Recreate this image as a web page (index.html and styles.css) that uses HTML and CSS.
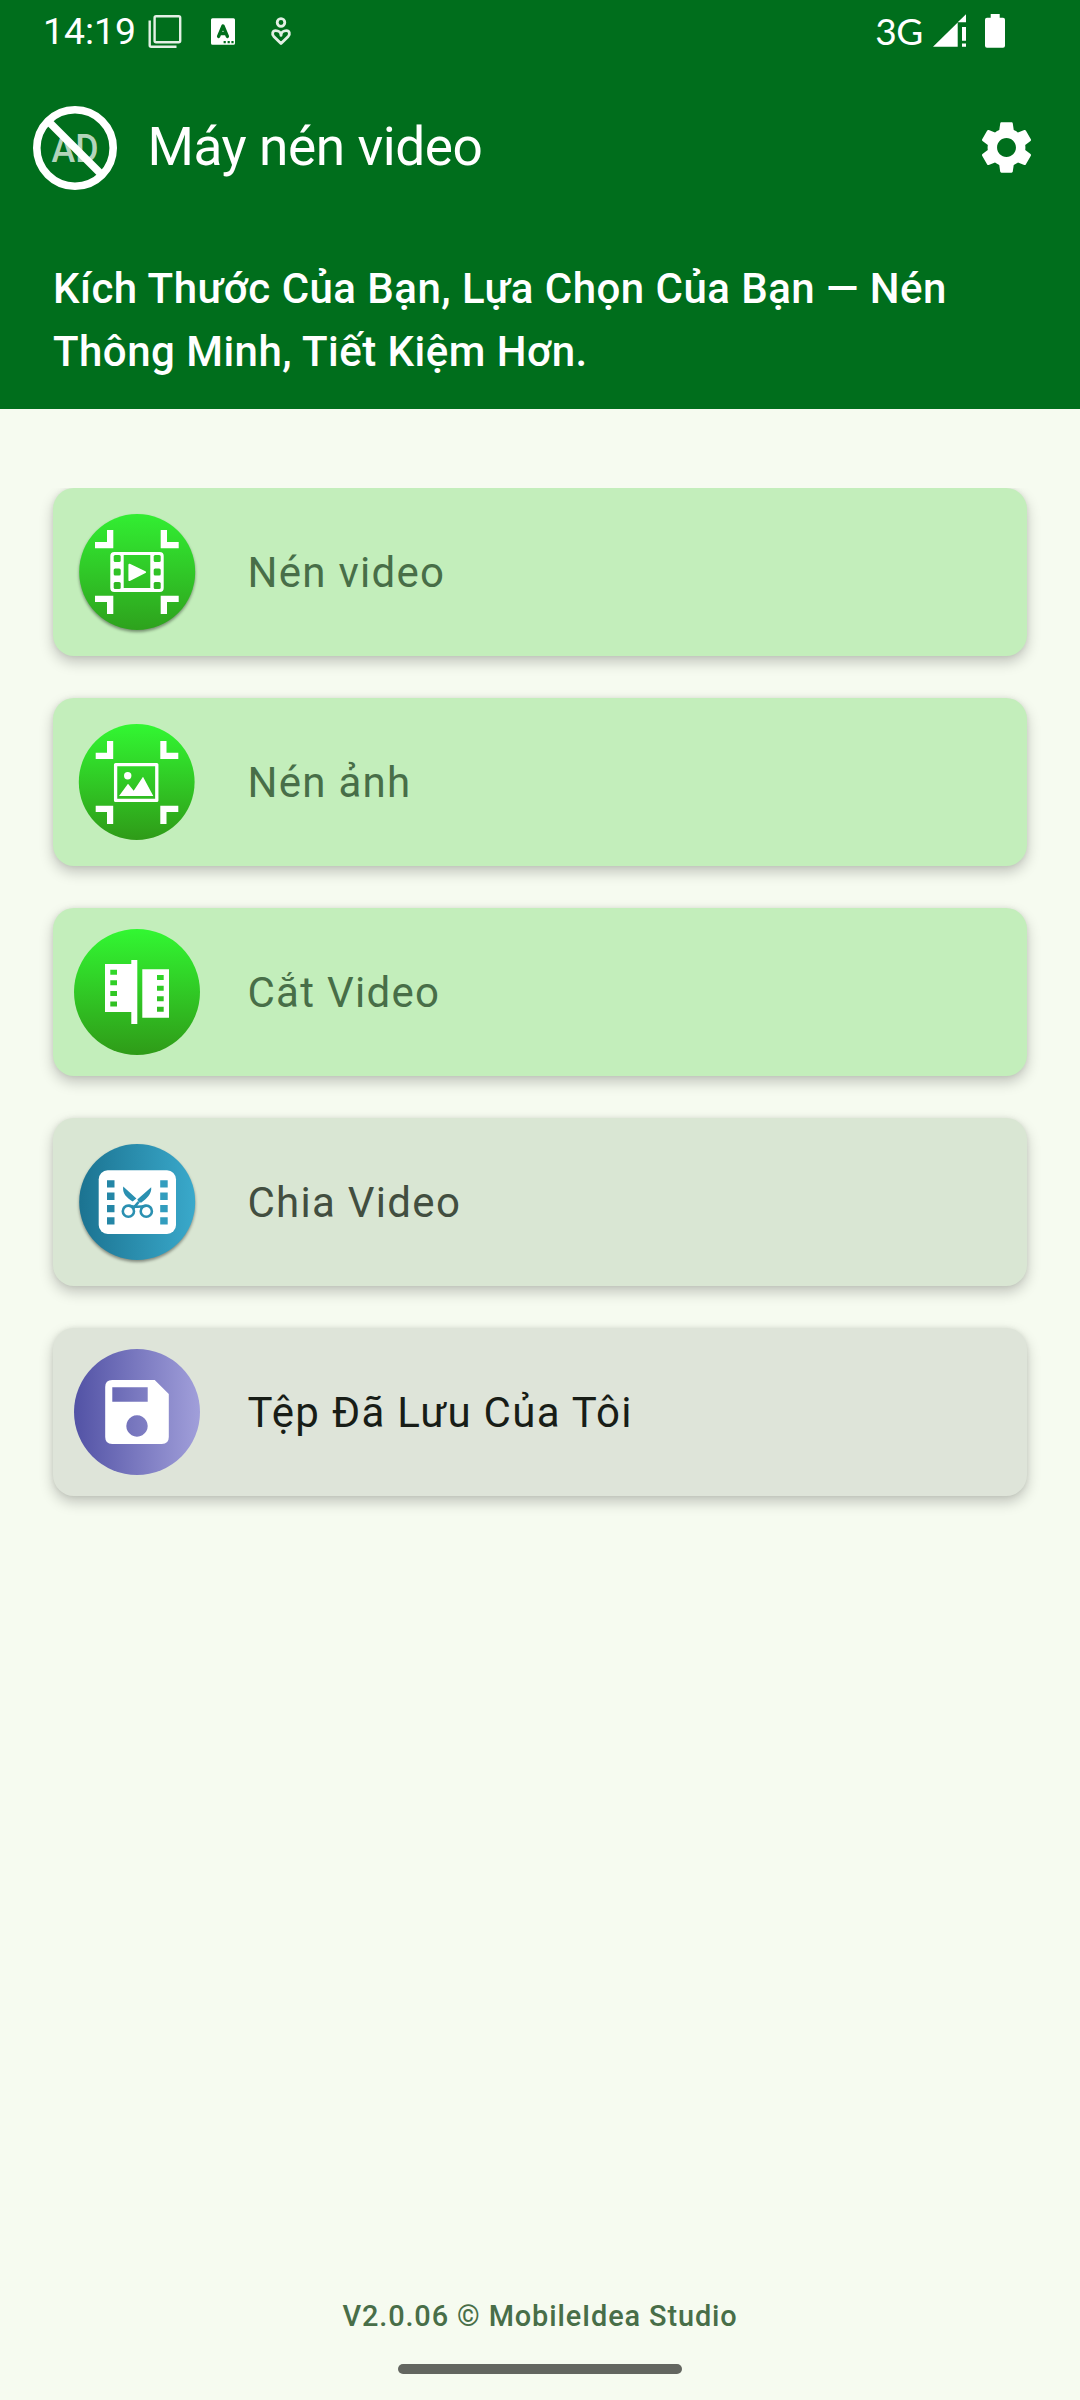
FILE: index.html
```html
<!DOCTYPE html>
<html lang="vi">
<head>
<meta charset="utf-8">
<title>Máy nén video</title>
<link rel="stylesheet" href="styles.css">
</head>
<body>
<div class="screen">
  <header class="top">
    <div class="status">
      <span class="clock">14:19</span>
      <svg class="status-left" width="146" height="36" viewBox="147 13 146 36" fill="none" stroke="#e3f0e5" stroke-width="2.400">
        <rect x="154.600" y="16.200" width="25.600" height="26" rx="1.500"/>
        <path d="M149.700 20.500V45.300Q149.700 46.800 151.200 46.800H176.500"/>
        <path fill="#fff" stroke="none" fill-rule="evenodd" d="M212.500 18.300H233.500Q235 18.300 235 19.800V43.200Q235 44.700 233.500 44.700H212.500Q211 44.700 211 43.200V19.800Q211 18.300 212.500 18.300ZM223.600 41v2.200h2.200V41ZM227.600 41v2.200h2.200V41ZM231.400 41v2.200h2.200V41Z"/>
        <path stroke="#006e1c" stroke-width="3.400" stroke-linejoin="round" stroke-linecap="round" d="M218.600 36.400L223 26L227.400 36.400M220 33.600H226"/>
        <circle cx="281" cy="22.500" r="3.800" stroke-width="2.800"/>
        <path stroke-width="2.800" stroke-linejoin="round" d="M281 43.600L273.800 36.400C271.600 34 272.500 30.600 275.600 30.600C278.400 30.600 281 32.400 281 35.400C281 32.400 283.600 30.600 286.400 30.600C289.500 30.600 290.400 34 288.200 36.400Z"/>
      </svg>
      <span class="network">3G</span>
      <svg class="status-right" width="74" height="36" viewBox="932 13 74 36" fill="#fff">
        <path d="M933 46.700L957.700 22.500V46.700ZM957.700 22.300L966 14.300V22.300ZM962 27h4v13.700h-4ZM962 43.500h4v3.200h-4Z"/>
        <path d="M990.700 14h9v3.700h3.300q2 0 2 2v26q0 2-2 2h-16q-2 0-2-2v-26q0-2 2-2h3.700Z"/>
      </svg>
    </div>
    <div class="appbar">
      <svg class="no-ads" width="84" height="84" viewBox="0 0 84 84">
        <text class="ad" x="42" y="55.500" text-anchor="middle" textLength="47" lengthAdjust="spacingAndGlyphs">AD</text>
        <circle cx="42" cy="42" r="38.200" fill="none" stroke="#fff" stroke-width="7.600"/>
        <path d="M15.500 15.500L68.500 68.500" stroke="#fff" stroke-width="7.600"/>
      </svg>
      <h1 class="title">Máy nén video</h1>
      <svg class="gear" width="63" height="63" viewBox="0 0 24 24" fill="#fff"><path d="M19.140 12.940c.04-.3.060-.61.060-.94 0-.32-.02-.64-.07-.94l2.030-1.580c.18-.14.23-.41.120-.61l-1.920-3.320c-.12-.22-.37-.29-.59-.22l-2.390.96c-.5-.38-1.030-.7-1.620-.94l-.36-2.540c-.04-.24-.24-.41-.48-.41h-3.840c-.24 0-.43.170-.47.410l-.36 2.540c-.59.240-1.130.570-1.620.940l-2.390-.96c-.22-.08-.47 0-.59.220L2.740 8.870c-.12.210-.08.470.120.610l2.030 1.580c-.05.3-.09.630-.09.940s.02.640.070.940l-2.030 1.580c-.18.140-.23.410-.12.610l1.920 3.320c.12.220.37.290.59.220l2.390-.96c.5.380 1.030.7 1.620.940l.36 2.540c.05.240.24.410.48.410h3.840c.24 0 .44-.17.470-.41l.36-2.540c.59-.24 1.130-.56 1.620-.94l2.390.96c.22.080.47 0 .59-.22l1.920-3.320c.12-.22.070-.47-.12-.61l-2.010-1.580zM12 15.600c-1.980 0-3.600-1.620-3.600-3.600s1.620-3.600 3.600-3.600 3.600 1.620 3.600 3.600-1.620 3.600-3.600 3.600z"/></svg>
    </div>
    <p class="tagline">Kích Thước Của Bạn, Lựa Chọn Của Bạn — Nén Thông Minh, Tiết Kiệm Hơn.</p>
  </header>

  <main class="menu">
    <div class="card">
      <svg class="icon" viewBox="0 0 126 126">
        <defs>
          <linearGradient id="green" x1="0" y1="0" x2="0" y2="1"><stop offset="0" stop-color="#32f732"/><stop offset="1" stop-color="#2f9b18"/></linearGradient>
          <linearGradient id="leaf" x1="0" y1="0" x2="0" y2="1"><stop offset="0" stop-color="#32ee32"/><stop offset="1" stop-color="#2ea21d"/></linearGradient>
          <linearGradient id="blue"><stop offset="0" stop-color="#1b7391"/><stop offset="1" stop-color="#3aa9cb"/></linearGradient>
          <linearGradient id="violet"><stop offset="0" stop-color="#5252a5"/><stop offset="1" stop-color="#a19fda"/></linearGradient>
        </defs>
        <circle class="raised" cx="63.200" cy="63" r="58" fill="url(#leaf)"/>
        <path fill="#fff" d="M33 21h6.300v18.300H21V33H33ZM86.700 21H93v12h11.700v6.300h-18ZM21 86.700h18.300V105H33V93H21ZM86.700 86.700h18V93H93v12h-6.300Z"/>
        <path fill="#fff" fill-rule="evenodd" d="M40.300 43h45.400q4 0 4 4v32q0 4-4 4H40.300q-4 0-4-4V47q0-4 4-4ZM49.700 46v33h26.600V46Z"/>
        <g fill="#30cb27"><rect x="39.700" y="46" width="7" height="7" rx="1.500"/><rect x="79.700" y="46" width="7" height="7" rx="1.500"/></g>
        <g fill="#2fc325"><rect x="39.700" y="59.600" width="7" height="7" rx="1.500"/><rect x="79.700" y="59.600" width="7" height="7" rx="1.500"/></g>
        <g fill="#2fb922"><rect x="39.700" y="73" width="7" height="7" rx="1.500"/><rect x="79.700" y="73" width="7" height="7" rx="1.500"/></g>
        <path fill="#fff" stroke="#fff" stroke-width="2" stroke-linejoin="round" d="M55.400 55.700L71 63.200L55.400 71Z"/>
      </svg>
      <span class="label">Nén video</span>
    </div>
    <div class="card">
      <svg class="icon" viewBox="0 0 126 126">
        <circle cx="62.700" cy="63" r="57.900" fill="url(#green)"/>
        <path fill="#fff" d="M33 22h6.200v18H21.700V33.800H33ZM86.300 22h6.200v11.800h11.800V40h-18ZM21.700 86.700h17.500V105H33V93H21.700ZM86.300 86.700h18V93H92.500v12h-6.200Z"/>
        <rect x="41.600" y="45.600" width="41.200" height="35.800" fill="none" stroke="#fff" stroke-width="3.300" stroke-linejoin="round"/>
        <circle cx="53.700" cy="56.700" r="3.700" fill="#fff"/>
        <path fill="#fff" d="M45 77L54 64.700L59.700 71.700L69 57.700L79.300 77Z"/>
      </svg>
      <span class="label">Nén ảnh</span>
    </div>
    <div class="card">
      <svg class="icon" viewBox="0 0 126 126">
        <circle cx="63" cy="63" r="63" fill="url(#green)"/>
        <path fill="#fff" fill-rule="evenodd" d="M31 35H57.300V31h6V95h-6V83H31ZM36.300 40.700v5H43v-5ZM36.300 51.300v5H43v-5ZM36.300 62v5H43v-5ZM36.300 72.400v5H43v-5ZM68.300 40.300H95V88.700H68.300ZM83 46v5h6.700v-5ZM83 56.700v5h6.700v-5ZM83 67.300v5h6.700v-5ZM83 77.700v5h6.700v-5Z"/>
      </svg>
      <span class="label">Cắt Video</span>
    </div>
    <div class="card sage">
      <svg class="icon" viewBox="0 0 126 126">
        <circle class="raised" cx="63.200" cy="63" r="58" fill="url(#blue)"/>
        <rect x="24.700" y="31.300" width="77.300" height="63.700" rx="9" fill="#fff"/>
        <path fill="#2486a6" d="M33 41.200h7.500v7.300H33ZM33 53.600h7.500v7.300H33ZM33 65.900h7.500v7.300H33ZM33 78.200h7.500v7.300H33Z"/>
        <path fill="#329dbe" d="M86.200 41.200h7.500v7.300h-7.500ZM86.200 53.600h7.500v7.300h-7.500ZM86.200 65.900h7.500v7.300h-7.500ZM86.200 78.200h7.500v7.300h-7.500Z"/>
        <path fill="#2a90b1" d="M49.200 47.500L62.400 59.600L58.600 62.600C52.500 58.500 48.200 54.500 49.200 47.500ZM77.200 48.200L63.300 60.600L64.800 63.600H67.400C72.500 59.500 78 54.800 77.200 48.200Z"/>
        <g fill="none" stroke="#2a90b1" stroke-width="2.600"><circle cx="54.400" cy="72.200" r="5.600"/><circle cx="72.300" cy="72.200" r="5.600"/><path d="M55 66.800Q63.300 68.600 72 66.800M59 69.600L64.600 63"/></g>
      </svg>
      <span class="label">Chia Video</span>
    </div>
    <div class="card stone">
      <svg class="icon" viewBox="0 0 126 126">
        <circle cx="63" cy="63" r="63" fill="url(#violet)"/>
        <path fill="#fff" fill-rule="evenodd" d="M38.200 31H80.700L94.800 45V88q0 7-7 7H38.200q-7 0-7-7V38q0-7 7-7ZM38.300 38.300V52.700H73.700V38.300ZM63 66.300a10.700 10.700 0 1 0 .01 0Z"/>
      </svg>
      <span class="label">Tệp Đã Lưu Của Tôi</span>
    </div>
  </main>

  <footer class="footer">
    <p class="version">V2.0.06 © MobileIdea Studio</p>
    <div class="handle"></div>
  </footer>
</div>
</body>
</html>
```
FILE: styles.css
```css
* { box-sizing: border-box; margin: 0; padding: 0; }

body {
  width: 1080px;
  background: #f6fbf0;
  font-family: Roboto, "Liberation Sans", sans-serif;
}

.screen {
  display: flex;
  flex-direction: column;
  height: 2400px;
}

.top {
  height: 409px;
  background: #006e1c;
  color: #fff;
}

.status {
  display: flex;
  align-items: center;
  height: 62px;
  padding: 0 74px 0 43px;
}

.clock {
  width: 104px;
  font-size: 37.3px;
  line-height: 62px;
}

.status-left { display: block; }

.network {
  margin-left: auto;
  margin-right: 9px;
  font-family: Lato, sans-serif;
  font-size: 37px;
  line-height: 60px;
  letter-spacing: -0.4px;
}

.appbar {
  display: flex;
  align-items: center;
  height: 171px;
  padding: 0 42px 0 33px;
}

.ad {
  font-size: 38px;
  font-weight: 500;
  fill: #b3d4bb;
}

.title {
  flex: 1;
  margin-left: 30.5px;
  font-size: 53.2px;
  font-weight: 400;
  line-height: 63px;
  letter-spacing: -0.45px;
}

.tagline {
  padding: 24px 52px 0 53px;
  font-size: 42px;
  font-weight: 500;
  line-height: 63px;
  letter-spacing: 0.47px;
}

.menu {
  display: flex;
  flex-direction: column;
  flex: 1;
  gap: 42px;
  margin-top: 79px;
  padding: 0 53px;
  overflow: hidden;
}

.card {
  display: flex;
  align-items: center;
  flex: none;
  gap: 47.5px;
  height: 168px;
  padding-left: 21px;
  border-radius: 21px;
  background: #c3eebb;
  color: #486e48;
  box-shadow: 0 6px 14px rgba(0, 0, 0, 0.22), 0 0 5px rgba(0, 0, 0, 0.08);
}

.sage { background: #d9e6d3; color: #424e40; }
.stone { background: #dee4d9; color: #181d17; }

.icon {
  width: 126px;
  height: 126px;
}

.raised { filter: drop-shadow(0 2px 1.5px rgba(0, 0, 0, 0.4)); }

.label {
  font-size: 42px;
  line-height: 63px;
  letter-spacing: 1.28px;
}

.footer {
  display: flex;
  flex-direction: column;
  align-items: center;
  height: 105px;
  color: #486e48;
}

.version {
  font-size: 28.9px;
  font-weight: 500;
  line-height: 42px;
  letter-spacing: 0.88px;
}

.handle {
  width: 284px;
  height: 10px;
  margin-top: 27px;
  border-radius: 5px;
  background: #636660;
}
```
